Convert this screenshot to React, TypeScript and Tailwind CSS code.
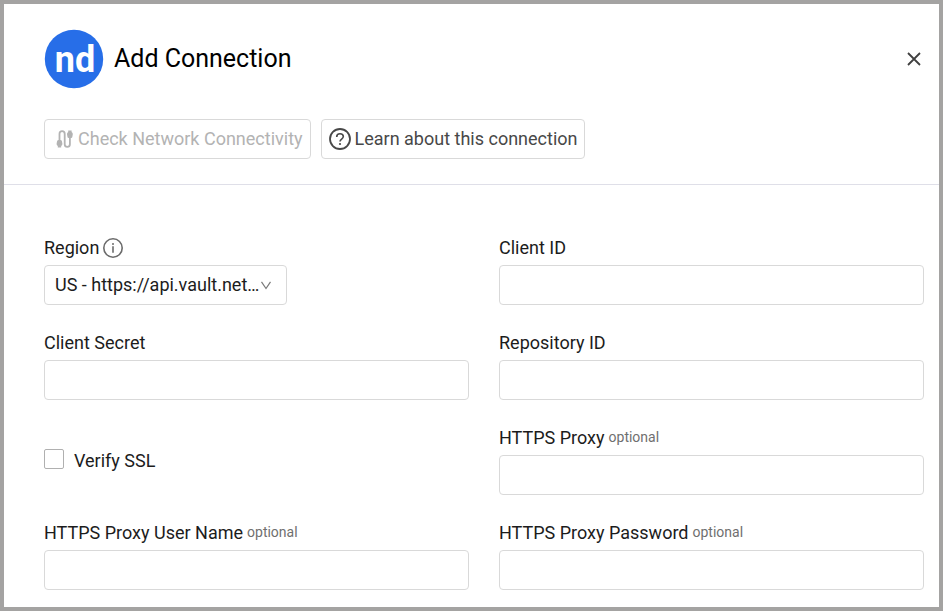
import type { ReactNode } from "react";

const inputClass =
  "h-10 w-full rounded border border-[#d9d9d9] bg-white px-2.5 text-lg outline-none focus:border-[#276ee8]";

const buttonClass =
  "flex h-10 items-center gap-1 rounded border border-[#d9d9d9] bg-white px-[7px] text-lg whitespace-nowrap";

function Logo() {
  return (
    <svg width="60" height="60" viewBox="0 0 60 60" role="img" aria-label="nd">
      <circle cx="30" cy="30" r="29.2" fill="#276ee8" />
      <text x="31" y="43" textAnchor="middle" fill="#fff" className="font-[Roboto,sans-serif] text-[36px] font-bold">
        nd
      </text>
    </svg>
  );
}

function CableIcon() {
  return (
    <svg width="22" height="22" viewBox="0 0 22 22" fill="none" aria-hidden="true">
      <path
        d="M7.500 14V5.800a2.600 2.600 0 0 1 5.200 0v10.400a2.600 2.600 0 0 0 5.200 0V8"
        stroke="currentColor"
        strokeWidth="1.800"
      />
      <path
        d="M5 13.500a1.500 1.500 0 0 1 1.500-1.500h2a1.500 1.500 0 0 1 1.500 1.500l.4 2.200a2.400 2.400 0 0 1-1.200 2.300v1.600H5.800V18a2.400 2.400 0 0 1-1.200-2.300zM15.400 8.500a1.500 1.500 0 0 0 1.500 1.500h2a1.500 1.500 0 0 0 1.500-1.500l.4-2.200A2.400 2.400 0 0 0 19.600 4V2.400h-3.400V4A2.400 2.400 0 0 0 15 6.300z"
        fill="currentColor"
      />
    </svg>
  );
}

function HelpIcon() {
  return (
    <svg width="22" height="22" viewBox="0 0 22 22" fill="none" aria-hidden="true">
      <circle cx="11" cy="11" r="10" stroke="currentColor" strokeWidth="1.800" />
      <path
        d="M7.700 8.900c0-2 1.400-3.200 3.300-3.200s3.300 1.200 3.300 2.900c0 2.500-3.300 2.500-3.300 5"
        stroke="currentColor"
        strokeWidth="1.600"
      />
      <circle cx="11" cy="16" r="1.100" fill="currentColor" />
    </svg>
  );
}

function InfoIcon() {
  return (
    <svg width="20" height="20" viewBox="0 0 20 20" fill="none" className="text-[#6b6b6b]" aria-hidden="true">
      <circle cx="10" cy="10" r="9.200" stroke="currentColor" strokeWidth="1.600" />
      <path d="M10 8.300v6.400" stroke="currentColor" strokeWidth="1.600" />
      <circle cx="10" cy="6" r="1" fill="currentColor" />
    </svg>
  );
}

type FieldProps = {
  id: string;
  label: string;
  optional?: boolean;
  icon?: ReactNode;
  type?: string;
  children?: ReactNode;
};

function Field({ id, label, optional, icon, type = "text", children }: FieldProps) {
  return (
    <div className="flex flex-col gap-[5px]">
      <label htmlFor={id} className="flex h-6 items-center gap-1 text-lg leading-6">
        <span>{label}</span>
        {optional && <span className="self-start text-sm leading-[22px] text-[#6f6f6f]">optional</span>}
        {icon}
      </label>
      {children ?? <input id={id} type={type} className={inputClass} />}
    </div>
  );
}

export default function App() {
  return (
    <main className="min-h-screen border-4 border-[#a4a3a2] bg-white font-[Roboto,sans-serif] text-[#1c1c1c]">
      <header className="flex flex-col gap-[30px] border-b border-[#dfdfe8] pt-[25px] pr-[15px] pb-[25px] pl-10">
        <div className="flex items-center gap-2.5">
          <Logo />
          <h1 className="flex-1 text-[25px] leading-[34px] text-black">Add Connection</h1>
          <button type="button" aria-label="Close" className="flex size-5 items-center justify-center text-[#404040]">
            <svg width="14" height="14" viewBox="0 0 14 14" aria-hidden="true">
              <path d="M1 1l12 12M13 1L1 13" stroke="currentColor" strokeWidth="1.800" />
            </svg>
          </button>
        </div>
        <div className="flex gap-2.5">
          <button type="button" disabled className={`${buttonClass} text-[#b3b3b3]`}>
            <CableIcon />
            Check Network Connectivity
          </button>
          <button type="button" className={`${buttonClass} text-[#484848]`}>
            <HelpIcon />
            Learn about this connection
          </button>
        </div>
      </header>

      <form className="grid grid-cols-2 gap-x-[30px] gap-y-[26px] pt-[51px] pr-[15px] pb-[17px] pl-10">
        <Field id="region" label="Region" icon={<InfoIcon />}>
          <div className="grid w-[243px] items-center">
            <select
              id="region"
              className="col-start-1 row-start-1 h-10 w-full appearance-none rounded border border-[#d9d9d9] bg-white pr-5 pl-2.5 text-lg outline-none focus:border-[#276ee8]"
            >
              <option>US - https://api.vault.net…</option>
            </select>
            <svg
              width="12"
              height="10"
              viewBox="0 0 12 10"
              fill="none"
              className="pointer-events-none col-start-1 row-start-1 mr-[15px] justify-self-end"
              aria-hidden="true"
            >
              <path d="M1.500 1.800L6 8.500l4.500-6.700" stroke="#7a7a7a" strokeWidth="1.200" />
            </svg>
          </div>
        </Field>
        <Field id="client-id" label="Client ID" />
        <Field id="client-secret" label="Client Secret" type="password" />
        <Field id="repository-id" label="Repository ID" />
        <div className="flex items-center">
          <label className="flex items-start gap-2.5 text-lg leading-6">
            <input
              type="checkbox"
              className="size-5 appearance-none rounded-xs border border-[#b0b0b0] bg-white checked:border-[#276ee8] checked:bg-[#276ee8]"
            />
            Verify SSL
          </label>
        </div>
        <Field id="proxy" label="HTTPS Proxy" optional />
        <Field id="proxy-user" label="HTTPS Proxy User Name" optional />
        <Field id="proxy-password" label="HTTPS Proxy Password" type="password" optional />
      </form>
    </main>
  );
}
